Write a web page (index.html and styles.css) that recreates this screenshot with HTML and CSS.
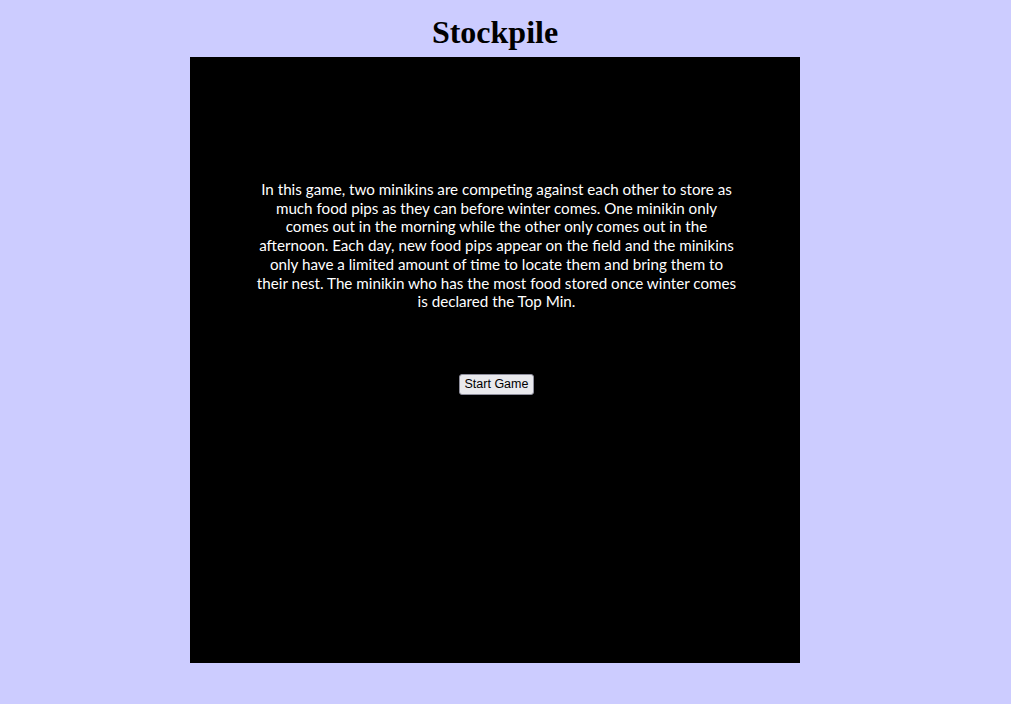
FILE: index.html
```html
<!DOCTYPE html>
<html lang="en">
<head>
<meta charset="utf-8">
<title>Stockpile</title>
<link rel="stylesheet" href="styles.css">
</head>
<body>
<h1 class="title">Stockpile</h1>
<main class="game">
  <p class="intro">In this game, two minikins are competing against each other to store as<br>
much food pips as they can before winter comes. One minikin only<br>
comes out in the morning while the other only comes out in the<br>
afternoon. Each day, new food pips appear on the field and the minikins<br>
only have a limited amount of time to locate them and bring them to<br>
their nest. The minikin who has the most food stored once winter comes<br>
is declared the Top Min.</p>
  <button class="start" type="button">Start Game</button>
</main>
</body>
</html>
```
FILE: styles.css
```css
html, body {
  background: #ccccff;
}
body {
  margin: 8px 29px 8px 8px;
}
.title {
  margin: 6px 0 6px;
  text-align: center;
  font-family: "Liberation Serif", "Times New Roman", serif;
  font-size: 32px;
  font-weight: bold;
  line-height: 37px;
  color: #000;
}
.game {
  width: 610px;
  height: 606px;
  margin: 0 auto;
  background: #000;
  box-sizing: border-box;
  padding-top: 123px;
  display: flex;
  flex-direction: column;
  align-items: center;
}
.intro {
  margin: 0;
  padding-left: 3px;
  color: #fff;
  text-align: center;
  font-family: "Gill Sans", "Gill Sans MT", Lato, sans-serif;
  font-size: 15.2px;
  line-height: 18.7px;
  white-space: nowrap;
}
.start {
  margin: 63px 0 0 3px;
  font-family: "Liberation Sans", Arial, sans-serif;
  font-size: 12.5px;
  height: 21px;
  padding: 0 5px;
  color: #000;
  background: #e9e9ed;
  border: 1px solid #8f8f9d;
  border-radius: 3px;
}
```
